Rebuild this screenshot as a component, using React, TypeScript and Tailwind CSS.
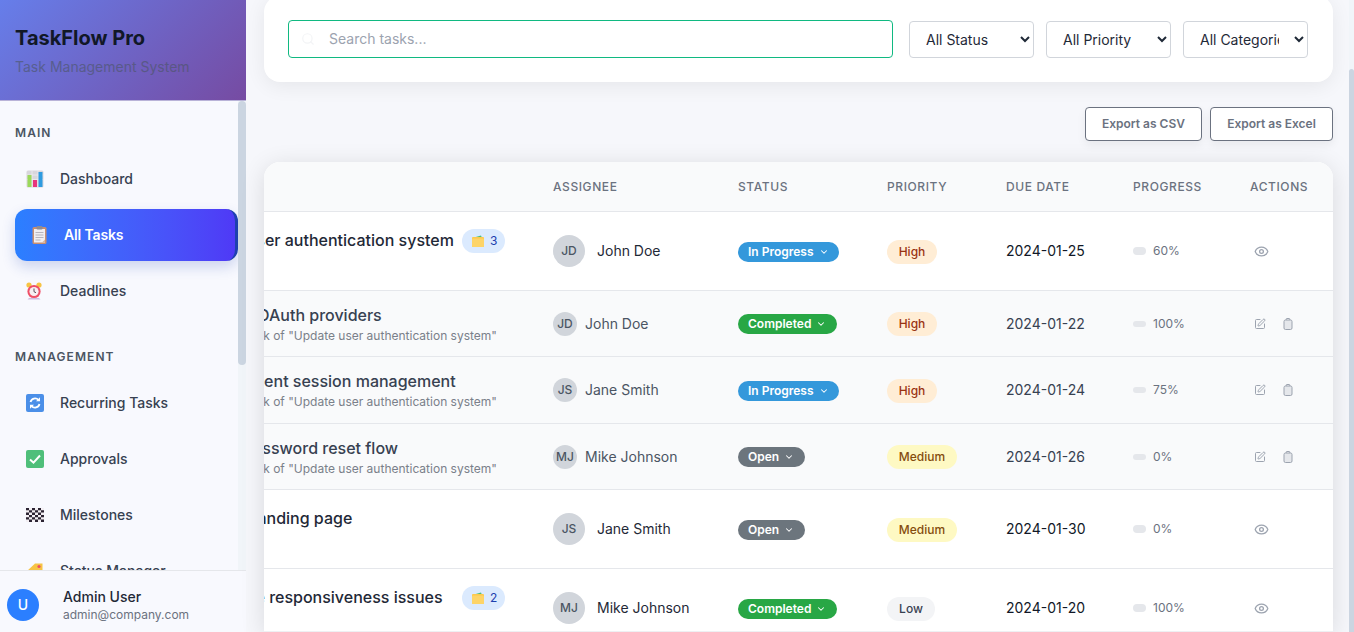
import React from 'react';
import { ChevronDown, Eye, SquarePen, Search } from 'lucide-react';

const ChartIcon = () => (
  <svg width="18" height="18" viewBox="0 0 18 18">
    <rect x="0.5" y="0.5" width="17" height="17" rx="1.5" fill="#d8d6dc" />
    <path d="M0.5 5h17M0.5 9.5h17M6 .5v17M12 .5v17" stroke="#f1eff3" strokeWidth="0.7" />
    <rect x="1.5" y="5" width="4" height="12" fill="#9bd95b" />
    <rect x="7" y="10" width="4" height="7" fill="#e8347c" />
    <rect x="12.5" y="2" width="4" height="15" fill="#2f9be0" />
  </svg>
);

const ClipboardIcon = () => (
  <svg width="15" height="18" viewBox="0 0 15 18">
    <rect x="0.5" y="1" width="14" height="17" rx="1.5" fill="#c98f70" />
    <rect x="2" y="3" width="11" height="13.5" fill="#f1eef2" />
    <rect x="4.5" y="0" width="6" height="3.5" rx="1" fill="#8d8c95" />
    <path d="M3.5 6.5h8M3.5 9h8M3.5 11.5h8M3.5 14h5" stroke="#a9a6b0" strokeWidth="0.8" />
    <path d="M10 16.5l3-3v3z" fill="#d9b79d" />
  </svg>
);

const AlarmIcon = () => (
  <svg width="16" height="18" viewBox="0 0 16 18">
    <circle cx="3" cy="3" r="2.6" fill="#f6c445" />
    <circle cx="13" cy="3" r="2.6" fill="#f6c445" />
    <path d="M3 16l-1.5 1.6h13L13 16z" fill="#cdbbe0" />
    <circle cx="8" cy="9.5" r="6.6" fill="#ef4e66" />
    <circle cx="8" cy="9.5" r="4.6" fill="#f7eef2" />
    <path d="M8 6.5v3.2l2 1" stroke="#5b4a58" strokeWidth="1" fill="none" />
  </svg>
);

const RepeatIcon = () => (
  <svg width="18" height="18" viewBox="0 0 18 18">
    <rect x="0" y="0" width="18" height="18" rx="2" fill="#4b8fe8" />
    <path d="M4.5 8a4.6 4.6 0 0 1 8-2" stroke="#fff" strokeWidth="1.8" fill="none" />
    <path d="M14 3.2v4h-4z" fill="#fff" />
    <path d="M13.5 10a4.6 4.6 0 0 1-8 2" stroke="#fff" strokeWidth="1.8" fill="none" />
    <path d="M4 14.8v-4h4z" fill="#fff" />
  </svg>
);

const CheckIcon = () => (
  <svg width="18" height="18" viewBox="0 0 18 18">
    <rect x="0" y="0" width="18" height="18" rx="2" fill="#4fbf7a" />
    <path d="M4 9.5l3.5 3.2L14 5.5" stroke="#fff" strokeWidth="2" fill="none" />
  </svg>
);

const FlagIcon = () => (
  <svg width="18" height="14" viewBox="0 0 18 14">
    <rect width="18" height="14" fill="#f3eff3" />
    <path
      d="M0 0h3v2.3H0zM6 0h3v2.3H6zM12 0h3v2.3h-3zM3 2.3h3v2.3H3zM9 2.3h3v2.3H9zM15 2.3h3v2.3h-3zM0 4.6h3v2.3H0zM6 4.6h3v2.3H6zM12 4.6h3v2.3h-3zM3 7h3v2.3H3zM9 7h3v2.3H9zM15 7h3v2.3h-3zM0 9.3h3v2.3H0zM6 9.3h3v2.3H6zM12 9.3h3v2.3h-3zM3 11.6h3V14H3zM9 11.6h3V14H9zM15 11.6h3V14h-3z"
      fill="#2c2433"
    />
  </svg>
);

const TagIcon = () => (
  <svg width="18" height="18" viewBox="0 0 18 18">
    <path d="M0 10L9 1.5h7.5V9L8 17.5z" fill="#f6c445" />
    <circle cx="13" cy="4.5" r="1.6" fill="#ef4e66" />
  </svg>
);

const FolderIcon = () => (
  <svg width="12" height="12" viewBox="0 0 12 12">
    <path d="M2 2.5L9 .5l.8 2z" fill="#4fbf7a" />
    <rect x="0" y="2" width="12" height="10" rx="1" fill="#fbc94d" />
    <rect x="0" y="3.5" width="12" height="8.5" rx="1" fill="#fdd468" />
  </svg>
);

const TrashIcon = () => (
  <svg width="10" height="12" viewBox="0 0 10 12" className="ml-[17px]">
    <rect x="3.2" y="0.5" width="3.6" height="2" rx="0.6" fill="none" stroke="#9ca3af" />
    <rect x="1" y="2" width="8" height="9.5" rx="1.5" fill="#e5e7eb" stroke="#9ca3af" />
  </svg>
);

type NavEntry = { label: string; icon: React.ReactNode; active?: boolean };

const NavItem = ({ label, icon, active }: NavEntry) => {
  if (active) {
    return (
      <div className="flex h-[52px] items-center rounded-xl border-r-[3px] border-[#1e40af] bg-gradient-to-r from-[#2b7fff] to-[#4f39f6] pl-[17px] shadow-[0_6px_14px_rgba(30,64,175,0.2)]">
        <span className="flex w-[32px] items-center">{icon}</span>
        <span className="text-sm font-semibold tracking-[-0.01em] text-white">{label}</span>
      </div>
    );
  }
  return (
    <div className="flex h-[52px] items-center pl-[11px]">
      <span className="flex w-[34px] items-center">{icon}</span>
      <span className="text-sm font-medium text-[#374151]">{label}</span>
    </div>
  );
};

const Sidebar = () => (
  <aside className="flex h-[632px] w-[246px] shrink-0 flex-col bg-[#f8f9fe]">
    <div className="h-[101px] shrink-0 border-b border-[#b9b3d8] bg-[linear-gradient(135deg,#667eea,#764ba2)] pl-[15px] pt-[24px]">
      <div className="text-xl font-bold leading-[28px] text-[#111827]">TaskFlow Pro</div>
      <div className="mt-[5px] text-sm leading-[20px] text-[#4b5563] opacity-60">Task Management System</div>
    </div>
    <div className="flex min-h-0 flex-1">
      <div className="min-w-0 flex-1 overflow-hidden pl-[15px]">
        <div className="pt-[24px] text-xs font-semibold leading-[16px] tracking-[0.09em] text-[#4b5563]">MAIN</div>
        <div className="mt-[12px] flex flex-col gap-[4px]">
          <NavItem label="Dashboard" icon={<ChartIcon />} />
          <NavItem label="All Tasks" icon={<ClipboardIcon />} active />
          <NavItem label="Deadlines" icon={<AlarmIcon />} />
        </div>
        <div className="mt-[32px] text-xs font-semibold leading-[16px] tracking-[0.09em] text-[#4b5563]">MANAGEMENT</div>
        <div className="mt-[12px] flex flex-col gap-[4px]">
          <NavItem label="Recurring Tasks" icon={<RepeatIcon />} />
          <NavItem label="Approvals" icon={<CheckIcon />} />
          <NavItem label="Milestones" icon={<FlagIcon />} />
          <NavItem label="Status Manager" icon={<TagIcon />} />
        </div>
      </div>
      <div className="w-[8px] shrink-0 bg-[#f1f5f9]">
        <div className="h-[264px] rounded bg-[#cbd5e1]" />
      </div>
    </div>
    <div className="flex h-[62px] shrink-0 items-center border-t border-[#e5e7eb] bg-[#f8f9fe] pl-[7px]">
      <div className="mt-[6px] flex h-[32px] w-[32px] items-center justify-center rounded-full bg-[#2b7fff] text-sm font-medium text-white">U</div>
      <div className="ml-[24px] mt-[6px]">
        <div className="text-sm font-medium leading-[20px] text-[#1f2937]">Admin User</div>
        <div className="text-xs leading-[16px] text-[#6b7280]">admin@company.com</div>
      </div>
    </div>
  </aside>
);

const Filters = () => (
  <div className="-mt-[4px] flex rounded-2xl bg-white p-6 pr-[25px] shadow-[0_4px_20px_rgba(0,0,0,0.07)]">
    <div className="flex h-[38px] min-w-0 flex-1 items-center rounded border border-[#10b981] pl-[12px]">
      <Search size={14} className="text-[#f3f4f6]" />
      <input
        className="ml-[14px] min-w-0 flex-1 bg-transparent text-sm outline-none placeholder:text-[#9ca3af]"
        placeholder="Search tasks..."
      />
    </div>
    <div className="ml-[16px] mt-[1px] flex gap-[12px]">
      <select className="h-[37px] w-[125px] rounded border border-[#d1d5db] bg-white pl-[12px] pr-[12px] text-sm text-[#1f2937]">
        <option>All Status</option>
      </select>
      <select className="h-[37px] w-[125px] rounded border border-[#d1d5db] bg-white pl-[12px] pr-[12px] text-sm text-[#1f2937]">
        <option>All Priority</option>
      </select>
      <select className="h-[37px] w-[125px] rounded border border-[#d1d5db] bg-white pl-[12px] pr-[12px] text-sm text-[#1f2937]">
        <option>All Categories</option>
      </select>
    </div>
  </div>
);

const ExportButton = ({ label, width }: { label: string; width: string }) => (
  <button className={`h-[34px] ${width} rounded border border-[#6b7280] bg-white text-xs font-semibold text-[#6b7280] shadow-[0_4px_10px_rgba(0,0,0,0.06)]`}>
    {label}
  </button>
);

const statusStyles = {
  'In Progress': 'w-[101px] bg-[#3498db]',
  Completed: 'w-[99px] bg-[#28a745]',
  Open: 'w-[67px] bg-[#6c757d]',
};

const priorityStyles = {
  High: 'w-[50px] bg-[#ffedd5] text-[#9a3412]',
  Medium: 'w-[70px] bg-[#fef9c3] text-[#854d0e]',
  Low: 'w-[48px] bg-[#f3f4f6] text-[#374151]',
};

type Task = {
  title: string;
  titleOffset: string;
  badge?: number;
  subtask?: boolean;
  assignee: string;
  initials: string;
  status: keyof typeof statusStyles;
  priority: keyof typeof priorityStyles;
  due: string;
  progress: number;
  height: string;
};

const tasks: Task[] = [
  { title: 'Update user authentication system', titleOffset: '-ml-[77px]', badge: 3, assignee: 'John Doe', initials: 'JD', status: 'In Progress', priority: 'High', due: '2024-01-25', progress: 60, height: 'h-[79px]' },
  { title: 'Add OAuth providers', titleOffset: '-ml-[4px]', subtask: true, assignee: 'John Doe', initials: 'JD', status: 'Completed', priority: 'High', due: '2024-01-22', progress: 100, height: 'h-[66px]' },
  { title: 'Implement session management', titleOffset: '-ml-[18px]', subtask: true, assignee: 'Jane Smith', initials: 'JS', status: 'In Progress', priority: 'High', due: '2024-01-24', progress: 75, height: 'h-[67px]' },
  { title: 'Create password reset flow', titleOffset: '-ml-[38px]', subtask: true, assignee: 'Mike Johnson', initials: 'MJ', status: 'Open', priority: 'Medium', due: '2024-01-26', progress: 0, height: 'h-[66px]' },
  { title: 'Design landing page', titleOffset: '-ml-[68px]', assignee: 'Jane Smith', initials: 'JS', status: 'Open', priority: 'Medium', due: '2024-01-30', progress: 0, height: 'h-[79px]' },
  { title: 'Fix mobile responsiveness issues', titleOffset: '-ml-[77px]', badge: 2, assignee: 'Mike Johnson', initials: 'MJ', status: 'Completed', priority: 'Low', due: '2024-01-20', progress: 100, height: 'h-[79px]' },
];

const columns = 'grid grid-cols-[289px_185px_149px_119px_127px_117px_1fr]';

const TaskRow = ({ task }: { task: Task }) => {
  const sub = task.subtask;
  return (
    <div className={`${columns} ${task.height} items-center border-b border-[#e5e7eb] ${sub ? 'bg-[#f9fafb]' : 'bg-white'}`}>
      {sub ? (
        <div className="-ml-[38px] self-start whitespace-nowrap pt-[12px]">
          <div className={`${task.titleOffset} text-base font-medium leading-[24px] text-[#374151]`}>{task.title}</div>
          <div className="-ml-[2px] mt-[1px] text-xs leading-[16px] text-[#7a808a]">Subtask of "Update user authentication system"</div>
        </div>
      ) : (
        <div className="self-start whitespace-nowrap pt-[16px]">
          <div className={`${task.titleOffset} w-[272px] text-base font-medium leading-[24px] text-[#1f2937]`}>{task.title}</div>
          {task.badge && (
            <div className="-mt-[23px] ml-[198px]">
              <span className="flex h-[24px] w-[43px] items-center gap-[6px] rounded-full bg-[#dbeafe] pl-[10px] text-xs font-normal text-[#1e40af]">
                <FolderIcon />
                {task.badge}
              </span>
            </div>
          )}
        </div>
      )}
      <div className="flex items-center">
        <div
          className={`flex items-center justify-center rounded-full bg-[#d1d5db] text-xs font-medium text-[#4b5563] ${
            sub ? 'h-[24px] w-[24px]' : 'h-[32px] w-[32px]'
          }`}
        >
          {task.initials}
        </div>
        <span className={`whitespace-nowrap text-sm ${sub ? 'ml-[8px] text-[#4b5563]' : 'ml-[12px] text-[#1f2937]'}`}>{task.assignee}</span>
      </div>
      <div className="mt-[1px]">
        <span className={`flex h-[20px] items-center gap-[5px] rounded-full pl-[10px] text-xs font-semibold text-white ${statusStyles[task.status]}`}>
          {task.status}
          <ChevronDown size={10} strokeWidth={2.5} />
        </span>
      </div>
      <div className="mt-[1px]">
        <span className={`flex h-[24px] items-center justify-center rounded-full text-xs font-medium ${priorityStyles[task.priority]}`}>
          {task.priority}
        </span>
      </div>
      <div className={`text-sm ${sub ? 'text-[#374151]' : 'text-[#111827]'}`}>{task.due}</div>
      <div className="flex items-center">
        <div className={`w-[13px] rounded-full bg-[#e5e7eb] ${sub ? 'h-[6px]' : 'h-[8px]'}`} />
        <span className="ml-[7px] text-xs text-[#6b7280]">{task.progress}%</span>
      </div>
      <div className="flex items-center pl-[4px]">
        {sub ? (
          <>
            <SquarePen size={12} className="text-[#9ca3af]" />
            <TrashIcon />
          </>
        ) : (
          <Eye size={15} strokeWidth={2.1} className="text-[#9ca3af]" />
        )}
      </div>
    </div>
  );
};

const TaskTable = () => (
  <div className="mt-[21px] overflow-hidden rounded-t-2xl bg-white shadow-[0_4px_24px_rgba(0,0,0,0.12)]">
    <div className={`${columns} h-[50px] items-center border-b border-[#e5e7eb] bg-[#f9fafb] text-xs font-medium tracking-[0.05em] text-[#6b7280]`}>
      <div />
      <div>ASSIGNEE</div>
      <div>STATUS</div>
      <div>PRIORITY</div>
      <div>DUE DATE</div>
      <div>PROGRESS</div>
      <div>ACTIONS</div>
    </div>
    {tasks.slice(0, 5).map((task) => (
      <TaskRow key={task.title} task={task} />
    ))}
    <div className="h-[63px] overflow-hidden border-b border-[#eef0f3]">
      <TaskRow task={tasks[5]} />
    </div>
  </div>
);

export default function App() {
  return (
    <div className="flex h-[632px] w-[1354px] overflow-hidden bg-[#f6f7fb] font-['Inter',sans-serif]">
      <Sidebar />
      <main className="flex min-w-0 flex-1">
        <div className="min-w-0 flex-1 pl-[18px] pr-[16px]">
          <Filters />
          <div className="mt-[25px] flex justify-end gap-[8px]">
            <ExportButton label="Export as CSV" width="w-[117px]" />
            <ExportButton label="Export as Excel" width="w-[123px]" />
          </div>
          <TaskTable />
        </div>
        <div className="w-[5px] shrink-0 bg-[#f1f5f9] pt-[69px]">
          <div className="h-full rounded-t bg-[#cbd5e1]" />
        </div>
      </main>
    </div>
  );
}
